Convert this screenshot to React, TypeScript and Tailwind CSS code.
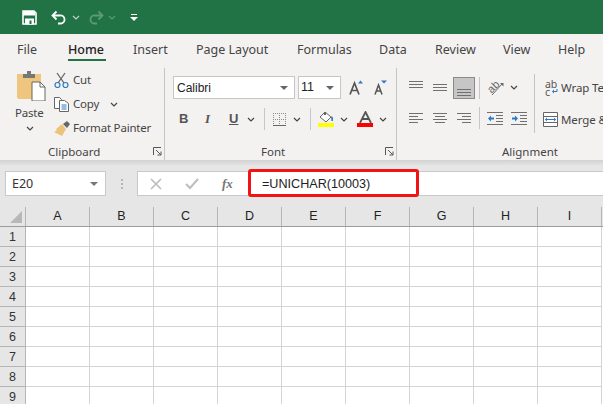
import React from "react";

const cols = ["A", "B", "C", "D", "E", "F", "G", "H", "I"];
const rows = [1, 2, 3, 4, 5, 6, 7, 8, 9];
const tabs = [
  { name: "File", w: "w-[51px]" },
  { name: "Home", w: "w-[65px]" },
  { name: "Insert", w: "w-[63px]" },
  { name: "Page Layout", w: "w-[101px]" },
  { name: "Formulas", w: "w-[82px]" },
  { name: "Data", w: "w-[56px]" },
  { name: "Review", w: "w-[68px]" },
  { name: "View", w: "w-[55px]" },
  { name: "Help", w: "w-[40px]" },
];

function Chev({ className = "", color = "#444" }: { className?: string; color?: string }) {
  return (
    <svg width="8" height="5" viewBox="0 0 8 5" className={className}>
      <path d="M1 1l3 3 3-3" fill="none" stroke={color} strokeWidth="1.2" />
    </svg>
  );
}

function Lines({ d }: { d: string }) {
  return (
    <svg width="16" height="14" viewBox="0 0 16 14">
      <path d={d} stroke="#707070" strokeWidth="1" fill="none" />
    </svg>
  );
}

function Launcher({ className = "" }: { className?: string }) {
  return (
    <svg width="9" height="9" viewBox="0 0 9 9" className={className}>
      <path d="M.5 8V.5H8M3 3l5 5M8 4.5V8H4.5" fill="none" stroke="#555" strokeWidth="1" />
    </svg>
  );
}

function TitleBar() {
  return (
    <div className="h-[34px] bg-[#217346] flex items-center pl-[22px]">
      <svg width="15" height="15" viewBox="0 0 15 15">
        <path d="M1 1h11l2 2v11H1z" fill="none" stroke="#fff" strokeWidth="1.6" />
        <path d="M1 1h12v4.500H1z" fill="#fff" />
        <path d="M3 8.500h9v6H3z" fill="#fff" />
        <path d="M7.500 10.500h2V14h-2z" fill="#217346" />
      </svg>
      <svg width="16" height="15" viewBox="0 0 16 15" className="ml-[14px]">
        <path d="M5.500 1.500L1.500 5.500l4 4" fill="none" stroke="#fff" strokeWidth="1.800" />
        <path d="M2 5.500h7a4 4 0 0 1 1 8H7" fill="none" stroke="#fff" strokeWidth="1.800" />
      </svg>
      <Chev className="ml-[5px]" color="#b9d2c4" />
      <svg width="16" height="15" viewBox="0 0 16 15" className="ml-[8px]">
        <path d="M10.500 1.500l4 4-4 4" fill="none" stroke="#5d9a79" strokeWidth="1.800" />
        <path d="M14 5.500H7a4 4 0 0 0-1 8h3" fill="none" stroke="#5d9a79" strokeWidth="1.800" />
      </svg>
      <Chev className="ml-[4px]" color="#5d9a79" />
      <svg width="8" height="8" viewBox="0 0 8 8" className="ml-[14px]">
        <path d="M1 1h6v1H1zM0 4h8L4 8z" fill="#fff" />
      </svg>
    </div>
  );
}

function TabBar() {
  return (
    <div className="h-[34px] flex pl-[17px] text-[12.5px] text-[#444] font-['Noto_Sans',sans-serif]">
      {tabs.map((t) => (
        <div key={t.name} className={`${t.w} shrink-0 pt-[7px] whitespace-nowrap`}>
          <span className={t.name === "Home" ? "inline-block h-[20px] border-b-2 border-[#217346] text-[#222] font-medium w-[38px]" : ""}>
            {t.name}
          </span>
        </div>
      ))}
    </div>
  );
}

function Clipboard() {
  return (
    <div className="w-[165px] shrink-0 h-[92px] flex flex-col border-r border-[#c4c4c4] relative">
      <div className="flex h-[77px] text-[11.5px] tracking-[-.2px] text-[#444]">
        <div className="w-[54px] pl-[17px] pt-[3px] shrink-0">
          <svg width="29" height="30" viewBox="0 0 29 30">
            <path d="M0 3h24v25H2a2 2 0 0 1-2-2z" fill="#eec67e" />
            <path d="M6 3h12v4H6z" fill="#777" />
            <path d="M10 0h4v3h-4z" fill="#777" />
            <path d="M15 11h8l5 5v14H15z" fill="#fff" stroke="#666" />
            <path d="M23 11v5h5" fill="none" stroke="#666" />
          </svg>
          <div className="-ml-[2px] mt-[3px] leading-[18px]">Paste</div>
          <Chev className="ml-[9px] mt-[4px]" />
        </div>
        <div className="flex flex-col pt-[4px] gap-[8px]">
          <div className="flex items-center h-[16px]">
            <svg width="15" height="16" viewBox="0 0 15 16">
              <path d="M3 1l7 10M11 1L4 11" stroke="#666" strokeWidth="1.300" />
              <circle cx="3.500" cy="13" r="2.500" fill="none" stroke="#2b79c2" strokeWidth="1.200" />
              <circle cx="11.500" cy="13" r="2.500" fill="none" stroke="#2b79c2" strokeWidth="1.200" />
            </svg>
            <span className="ml-[4px]">Cut</span>
          </div>
          <div className="flex items-center h-[16px]">
            <svg width="15" height="15" viewBox="0 0 15 15">
              <path d="M.5.5h5l2 2v9H.5z" fill="#fff" stroke="#666" />
              <path d="M5.500 3.500h5l4 3v8h-9z" fill="#fff" stroke="#666" />
              <path d="M7.500 8h5M7.500 10h5M7.500 12h5" stroke="#2b79c2" />
            </svg>
            <span className="ml-[4px]">Copy</span>
            <Chev className="ml-[11px]" />
          </div>
          <div className="flex items-center h-[16px]">
            <svg width="16" height="15" viewBox="0 0 16 15">
              <path d="M9 3l4-3 3 3-3 4z" fill="#666" />
              <path d="M8 3l4 5-4 7-8-4 3-2-1-1z" fill="#edc27c" />
            </svg>
            <span className="ml-[3px] whitespace-nowrap">Format Painter</span>
          </div>
        </div>
      </div>
      <div className="text-[11.5px] text-[#444] pl-[48px] leading-[14px]">Clipboard</div>
      <Launcher className="absolute left-[153px] bottom-[4px]" />
    </div>
  );
}

function FontGroup() {
  return (
    <div className="w-[232px] shrink-0 h-[92px] flex flex-col border-r border-[#c4c4c4] relative pl-[8px]">
      <div className="flex items-center h-[23px] mt-[8px]">
        <div className="w-[122px] h-[23px] bg-white border border-[#c6c6c6] flex items-center pl-[3px] pr-[6px] justify-between text-[12px] text-[#222] font-['Liberation_Sans',sans-serif]">
          Calibri
          <span className="w-0 h-0 border-x-[4px] border-x-transparent border-t-[4px] border-t-[#666]" />
        </div>
        <div className="w-[43px] h-[23px] ml-[3px] bg-white border border-[#c6c6c6] flex items-center pl-[2px] pr-[6px] justify-between text-[12.5px] text-[#222] font-['Liberation_Sans',sans-serif]">
          11
          <span className="w-0 h-0 border-x-[4px] border-x-transparent border-t-[4px] border-t-[#666]" />
        </div>
        <svg width="14" height="15" viewBox="0 0 14 15" className="ml-[8px]">
          <path d="M1 14.500L5.500 3 10 14.500M3 10.500h5" fill="none" stroke="#555" strokeWidth="1.700" />
          <path d="M9 3.500l2.500-3 2.500 3z" fill="#2b79c2" />
        </svg>
        <svg width="13" height="15" viewBox="0 0 13 15" className="ml-[11px]">
          <path d="M1 14.500L4.500 5 8 14.500M2.500 11h4" fill="none" stroke="#555" strokeWidth="1.500" />
          <path d="M7 .5h6l-3 3z" fill="#2b79c2" />
        </svg>
      </div>
      <div className="flex items-center h-[26px] mt-[7px] font-['Liberation_Serif',serif] text-[13px] text-[#555]">
        <span className="ml-[6px] w-[10px] font-bold font-['Liberation_Sans',sans-serif]">B</span>
        <span className="ml-[16px] w-[8px] italic font-bold">I</span>
        <span className="ml-[16px] w-[10px] underline font-bold font-['Liberation_Sans',sans-serif]">U</span>
        <Chev className="ml-[8px]" />
        <div className="h-[22px] w-px bg-[#c6c6c6] ml-[9px]" />
        <svg width="13" height="13" viewBox="0 0 13 13" className="ml-[8px]" shapeRendering="crispEdges">
          <path d="M0 .5h13M0 6.500h13M.5 0v13M6.500 0v13M12.500 0v13" stroke="#8c8c8c" strokeDasharray="1 1" fill="none" />
          <path d="M0 12.500h13" stroke="#666" />
        </svg>
        <Chev className="ml-[7px]" />
        <div className="h-[22px] w-px bg-[#c6c6c6] ml-[9px]" />
        <div className="ml-[7px] w-[16px] flex flex-col">
          <svg width="16" height="12" viewBox="0 0 16 12">
            <path d="M7 1l6 5-5 5-6-5z" fill="#fff" stroke="#666" />
            <path d="M6 1h2v3H6z" fill="#666" />
            <path d="M13 5l2 1.500V10h-1.500z" fill="#2b79c2" />
          </svg>
          <div className="h-[4px] bg-[#ffff00]" />
        </div>
        <Chev className="ml-[6px]" />
        <div className="ml-[9px] w-[16px] flex flex-col items-center">
          <svg width="13" height="12" viewBox="0 0 13 12">
            <path d="M1 12L6.500 1 12 12M3.500 8h6" fill="none" stroke="#555" strokeWidth="1.800" />
          </svg>
          <div className="h-[4px] w-[16px] bg-[#ff0000]" />
        </div>
        <Chev className="ml-[6px]" />
      </div>
      <div className="text-[11.5px] text-[#444] mt-[13px] pl-[88px] leading-[14px]">Font</div>
      <Launcher className="absolute left-[220px] bottom-[4px]" />
    </div>
  );
}

function AlignGroup() {
  return (
    <div className="flex-1 h-[92px] flex flex-col relative overflow-hidden pl-[11px]">
      <div className="flex h-[66px]">
        <div className="w-[127px] shrink-0 border-r border-[#c4c4c4] h-[59px] mt-[6px] flex flex-col">
          <div className="flex items-center h-[23px] mt-[2px]">
            <Lines d="M1 .5h14M1 3.500h14M1 6.500h14" />
            <div className="ml-[8px]"><Lines d="M1 3.500h14M1 6.500h14M1 9.500h14" /></div>
            <div className="ml-[5px] w-[22px] h-[22px] bg-[#c6c6c6] border border-[#8a8a8a] flex items-end justify-center pb-[1px]">
              <Lines d="M1 6.500h14M1 9.500h14M1 12.500h14" />
            </div>
            <div className="w-px h-[22px] bg-[#c6c6c6] ml-[4px]" />
            <svg width="18" height="16" viewBox="0 0 18 16" className="ml-[7px] overflow-visible">
              <text x="1" y="11" fontSize="11" fontFamily="Liberation Sans" fill="#666" transform="rotate(-45 6 8)">ab</text>
              <path d="M5 15L15 4" stroke="#666" />
              <path d="M13 3h3.500v3.500z" fill="#666" />
            </svg>
            <Chev className="ml-[5px]" />
          </div>
          <div className="flex items-center h-[23px] mt-[7px]">
            <Lines d="M1 2.500h14M1 5.500h9M1 8.500h14M1 11.500h9" />
            <div className="ml-[8px]"><Lines d="M1 2.500h14M3 5.500h10M1 8.500h14M3 11.500h10" /></div>
            <div className="ml-[8px]"><Lines d="M1 2.500h14M6 5.500h9M1 8.500h14M6 11.500h9" /></div>
            <div className="w-px h-[22px] bg-[#c6c6c6] ml-[7px]" />
            <svg width="17" height="14" viewBox="0 0 17 14" className="ml-[7px]">
              <path d="M0 1.500h16M9 4.500h7M9 7.500h7M9 10.500h7M0 13.500h16" stroke="#707070" fill="none" />
              <path d="M1 7.500l3-3v2h3v2H4v2z" fill="#2b79c2" />
            </svg>
            <svg width="17" height="14" viewBox="0 0 17 14" className="ml-[7px]">
              <path d="M0 1.500h16M9 4.500h7M9 7.500h7M9 10.500h7M0 13.500h16" stroke="#707070" fill="none" />
              <path d="M7 7.500l-3-3v2H1v2h3v2z" fill="#2b79c2" />
            </svg>
          </div>
        </div>
        <div className="pl-[10px] flex flex-col text-[11.5px] tracking-[-.1px] text-[#444] whitespace-nowrap mt-[6px]">
          <div className="flex items-center h-[24px] mt-[2px]">
            <div className="relative w-[13px] text-[10.5px] leading-[8px] font-['Noto_Sans',sans-serif] text-[#555]">
              ab<br />c
              <svg width="6" height="5" viewBox="0 0 6 5" className="absolute left-[7px] top-[9px]">
                <path d="M5 0v2.500H1" fill="none" stroke="#2b79c2" />
                <path d="M0 2.500l2-2v4z" fill="#2b79c2" />
              </svg>
            </div>
            <span className="ml-[3px]">Wrap Text</span>
          </div>
          <div className="flex items-center h-[24px] mt-[7px] -ml-[2px]">
            <svg width="15" height="15" viewBox="0 0 15 15">
              <path d="M.5.5h14v14H.5zM.5 4.500h14M.5 10.500h14" fill="#fff" stroke="#666" />
              <path d="M2.500 7.500h10" stroke="#2b79c2" />
              <path d="M2 7.500l2-2v4zM13 7.500l-2-2v4z" fill="#2b79c2" />
            </svg>
            <span className="ml-[3px] pt-[1px]">Merge &amp; Center</span>
          </div>
        </div>
      </div>
      <div className="text-[11.5px] text-[#444] mt-[11px] pl-[94px] leading-[14px]">Alignment</div>
    </div>
  );
}

function FormulaBar() {
  return (
    <div className="h-[47px] relative flex items-start pt-[11px] pl-[5px] bg-gradient-to-b from-[#d2d2d2] to-[#e6e6e6] to-[6px]">
      <div className="w-[101px] h-[25px] bg-white border border-[#c9c9c9] flex items-center justify-between pl-[6px] pr-[7px] text-[12.5px] text-[#333] font-['Noto_Sans',sans-serif]">
        <span className="pt-[1px]">E20</span>
        <span className="w-0 h-0 border-x-[4px] border-x-transparent border-t-[4px] border-t-[#777]" />
      </div>
      <div className="ml-[15px] mt-[8px] flex flex-col gap-[2px]">
        <div className="w-[2px] h-[2px] bg-[#b5b5b5]" />
        <div className="w-[2px] h-[2px] bg-[#b5b5b5]" />
        <div className="w-[2px] h-[2px] bg-[#b5b5b5]" />
      </div>
      <div className="ml-[14px] flex-1 h-[25px] bg-white border border-[#c9c9c9] border-r-0 flex items-center">
        <svg width="12" height="12" viewBox="0 0 12 12" className="ml-[12px]">
          <path d="M1 1l10 10M11 1L1 11" stroke="#bdbdbd" strokeWidth="1.700" />
        </svg>
        <svg width="14" height="12" viewBox="0 0 14 12" className="ml-[23px]">
          <path d="M1 6l4 4 8-9" fill="none" stroke="#bdbdbd" strokeWidth="2" />
        </svg>
        <span className="ml-[23px] w-[14px] text-[13px] italic font-bold text-[#777] font-['Liberation_Serif',serif]">fx</span>
        <span className="ml-[26px] pt-[1px] text-[12.6px] text-[#222] font-['Liberation_Sans',sans-serif] whitespace-nowrap">=UNICHAR(10003)</span>
      </div>
      <div className="absolute left-[248px] top-[9px] w-[171px] h-[28px] border-[3px] border-[#f01414] rounded-[3px]" />
    </div>
  );
}

function Sheet() {
  return (
    <div className="font-['Liberation_Sans',sans-serif] text-[12.5px] text-[#222]">
      <div className="h-[20px] flex bg-[#e6e6e6] border-b border-[#9c9c9c]">
        <div className="w-[26px] shrink-0 border-r border-[#b5b5b5] relative">
          <div className="absolute right-[3px] bottom-[3px] w-0 h-0 border-l-[12px] border-l-transparent border-b-[12px] border-b-[#b8b8b8]" />
        </div>
        {cols.map((c) => (
          <div key={c} className="w-[64px] shrink-0 border-r border-[#b5b5b5] flex items-center justify-center">
            {c}
          </div>
        ))}
      </div>
      {rows.map((r) => (
        <div key={r} className="h-[20px] flex bg-white">
          <div className="w-[26px] shrink-0 bg-[#e6e6e6] border-r border-b border-[#b5b5b5] flex items-center justify-center pt-[2px] text-[#333]">
            {r}
          </div>
          {cols.map((c) => (
            <div key={c} className="w-[64px] shrink-0 border-r border-b border-[#d4d4d4]" />
          ))}
        </div>
      ))}
    </div>
  );
}

export default function App() {
  return (
    <div className="w-[603px] h-[404px] overflow-hidden bg-white font-['Noto_Sans',sans-serif]">
      <TitleBar />
      <div className="bg-[#f3f2f1]">
        <TabBar />
        <div className="flex h-[92px]">
          <Clipboard />
          <FontGroup />
          <AlignGroup />
        </div>
      </div>
      <FormulaBar />
      <Sheet />
    </div>
  );
}
